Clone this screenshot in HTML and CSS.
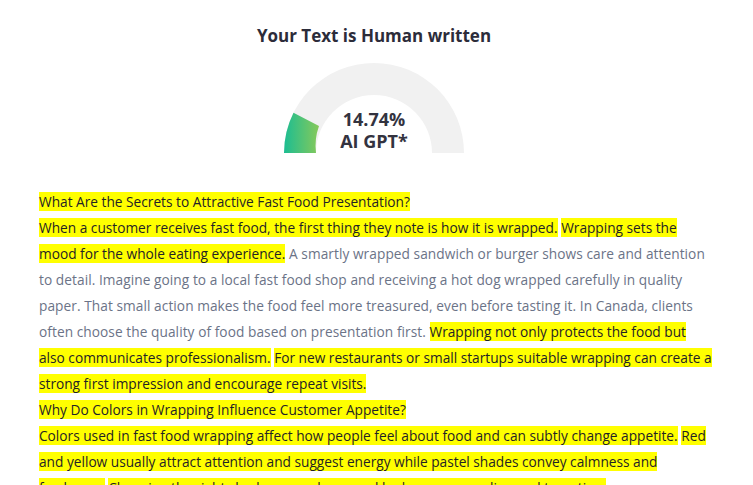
FILE: index.html
```html
<!DOCTYPE html>
<html>
<head>
<meta charset="utf-8">
<link rel="stylesheet" href="styles.css">
</head>
<body>
<div class="page">
  <section class="result">
    <h2 class="title">Your Text is Human written</h2>
    <div class="gauge">
      <svg width="180" height="90" viewBox="0 0 180 90">
        <defs>
          <linearGradient id="g" x1="0" y1="0" x2="1" y2="0">
            <stop offset="0" stop-color="#1cbd92"/>
            <stop offset="1" stop-color="#86c95a"/>
          </linearGradient>
        </defs>
        <path d="M0 90 A90 90 0 0 1 180 90 L148 90 A58 58 0 0 0 32 90 Z" fill="#f1f1f1"/>
        <path d="M0 90 A90 90 0 0 1 9.5 49.8 L35 63 A58 58 0 0 0 32 90 Z" fill="url(#g)"/>
      </svg>
      <div class="gauge-label">
        <span>14.74%</span>
        <span>AI GPT*</span>
      </div>
    </div>
  </section>
  <div class="text">
    <p><span class="hl">What Are the Secrets to Attractive Fast Food Presentation?</span></p>
    <p><span class="hl">When a customer receives fast food, the first thing they note is how it is wrapped.</span> <span class="hl">Wrapping sets the mood for the whole eating experience.</span> A smartly wrapped sandwich or burger shows care and attention to detail. Imagine going to a local fast food shop and receiving a hot dog wrapped carefully in quality paper. That small action makes the food feel more treasured, even before tasting it. In Canada, clients often choose the quality of food based on presentation first. <span class="hl">Wrapping not only protects the food but also communicates professionalism.</span> <span class="hl">For new restaurants or small startups suitable wrapping can create a strong first impression and encourage repeat visits.</span></p>
    <p><span class="hl">Why Do Colors in Wrapping Influence Customer Appetite?</span></p>
    <p><span class="hl">Colors used in fast food wrapping affect how people feel about food and can subtly change appetite.</span> <span class="hl">Red and yellow usually attract attention and suggest energy while pastel shades convey calmness and freshness.</span> <span class="hl">Choosing the right shade can make a meal look more appealing and tempting.</span></p>
  </div>
</div>
</body>
</html>
```

FILE: styles.css
```css
html, body {
  margin: 0;
  padding: 0;
  background: #ffffff;
}

body {
  font-family: "Open Sans", "Noto Sans", sans-serif;
}

.page {
  width: 753px;
  height: 485px;
  overflow: hidden;
}

.result {
  display: flex;
  flex-direction: column;
  align-items: center;
  padding: 24px 5px 0 0;
}

.title {
  margin: 0;
  font-size: 17px;
  line-height: 24px;
  font-weight: 700;
  color: #2c2c3a;
}

.gauge {
  position: relative;
  width: 180px;
  height: 90px;
  margin-top: 15px;
}

.gauge svg {
  display: block;
}

.gauge-label {
  position: absolute;
  left: 0;
  right: 0;
  top: 45px;
  display: flex;
  flex-direction: column;
  align-items: center;
  font-size: 18px;
  line-height: 22px;
  font-weight: 700;
  color: #33333f;
}

.text {
  padding: 36px 41px 0 39px;
  font-size: 13.7px;
  line-height: 26px;
  color: #6b7387;
}

.text p {
  margin: 0;
  letter-spacing: 0.06px;
}

.hl {
  background: #ffff00;
  color: #1f2326;
  letter-spacing: 0;
}
```
